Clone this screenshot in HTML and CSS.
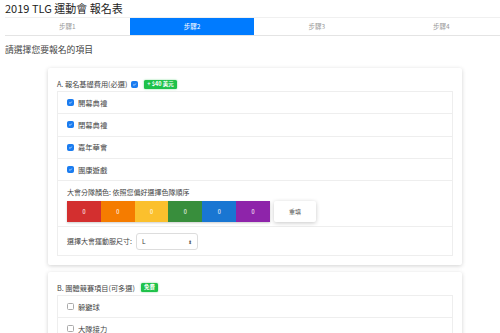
FILE: index.html
```html
<!DOCTYPE html>
<html lang="zh-Hant">
<head>
<meta charset="utf-8">
<title>2019 TLG 運動會 報名表</title>
<link rel="stylesheet" href="styles.css">
</head>
<body>
<div class="page">
  <h1 class="title">2019 TLG 運動會 報名表</h1>
  <div class="steps">
    <div class="step">步驟1</div>
    <div class="step active">步驟2</div>
    <div class="step">步驟3</div>
    <div class="step">步驟4</div>
  </div>
  <p class="prompt">請選擇您要報名的項目</p>

  <section class="card">
    <div class="card-head">
      <span>A. 報名基礎費用(必選)</span>
      <span class="cb checked"><svg viewBox="0 0 8 8"><path d="M2 4.2 L3.4 5.5 L6 2.6" fill="none" stroke="#fff" stroke-width="1.1"/></svg></span>
      <span class="badge">+ $40 美元</span>
    </div>
    <ul class="list">
      <li class="item"><span class="cb checked"><svg viewBox="0 0 8 8"><path d="M2 4.2 L3.4 5.5 L6 2.6" fill="none" stroke="#fff" stroke-width="1.1"/></svg></span>開幕典禮</li>
      <li class="item"><span class="cb checked"><svg viewBox="0 0 8 8"><path d="M2 4.2 L3.4 5.5 L6 2.6" fill="none" stroke="#fff" stroke-width="1.1"/></svg></span>閉幕典禮</li>
      <li class="item"><span class="cb checked"><svg viewBox="0 0 8 8"><path d="M2 4.2 L3.4 5.5 L6 2.6" fill="none" stroke="#fff" stroke-width="1.1"/></svg></span>嘉年華會</li>
      <li class="item"><span class="cb checked"><svg viewBox="0 0 8 8"><path d="M2 4.2 L3.4 5.5 L6 2.6" fill="none" stroke="#fff" stroke-width="1.1"/></svg></span>團康遊戲</li>
      <li class="item color-item">
        <div class="color-label">大會分隊顏色: 依照您偏好選擇色隊順序</div>
        <div class="color-row">
          <div class="swatches">
            <span class="sw red">0</span>
            <span class="sw orange">0</span>
            <span class="sw yellow">0</span>
            <span class="sw green">0</span>
            <span class="sw blue">0</span>
            <span class="sw purple">0</span>
          </div>
          <button class="reset">重填</button>
        </div>
      </li>
      <li class="item size-item">
        <span>選擇大會運動服尺寸:</span>
        <span class="select"><span>L</span><span class="arrows">⬍</span></span>
      </li>
    </ul>
  </section>

  <section class="card">
    <div class="card-head">
      <span>B. 團體競賽項目(可多選)</span>
      <span class="badge">免費</span>
    </div>
    <ul class="list">
      <li class="item"><span class="cb"></span>躲避球</li>
      <li class="item"><span class="cb"></span>大隊接力</li>
      <li class="item"><span class="cb"></span>拔河</li>
    </ul>
  </section>
</div>
</body>
</html>
```
FILE: styles.css
```css
html, body {
  margin: 0;
  padding: 0;
  background: #fff;
  overflow: hidden;
}
body {
  font-family: "Noto Sans CJK TC", "Noto Sans", sans-serif;
  color: #333;
}
.page {
  width: 500px;
  padding-left: 5px;
}
.title {
  margin: 0;
  height: 17px;
  font-size: 11px;
  line-height: 17px;
  font-weight: 400;
  color: #222;
}
.steps {
  display: grid;
  grid-template-columns: repeat(4, 124.7px);
  height: 17px;
  border-top: 1px solid #f0f0f0;
  border-bottom: 1px solid #e4e4e4;
}
.step {
  font-size: 6.5px;
  line-height: 17px;
  text-align: center;
  color: #999;
}
.step.active {
  background: #007bff;
  color: #fff;
}
.prompt {
  margin: 9px 0 13px;
  font-size: 8.8px;
  line-height: 10px;
  color: #444;
}
.card {
  margin: 0 43px 7px 43px;
  padding: 9px 9px 9px;
  background: #fff;
  border-radius: 2px;
  box-shadow: 0 1px 4px rgba(0,0,0,0.18);
}
.card-head {
  display: flex;
  align-items: center;
  gap: 4px;
  height: 14px;
  font-size: 7.2px;
  color: #444;
}
.cb {
  display: inline-flex;
  align-items: center;
  justify-content: center;
  width: 7px;
  height: 7px;
  box-sizing: border-box;
  border: 1px solid #aaa;
  border-radius: 1.5px;
  background: #fff;
  flex: none;
}
.cb.checked {
  border-color: #1a7cf0;
  background: #1a7cf0;
}
.cb svg {
  width: 7px;
  height: 7px;
}
.badge {
  margin-left: 2px;
  padding: 0 3px;
  height: 9px;
  line-height: 9px;
  font-size: 5.5px;
  font-weight: 700;
  color: #fff;
  background: #1fc24a;
  border-radius: 1.5px;
  box-shadow: 0 0 2px rgba(31,194,74,0.6);
}
.list {
  list-style: none;
  margin: 0;
  padding: 0;
  border: 1px solid #eee;
  border-top: none;
}
.item {
  display: flex;
  align-items: center;
  gap: 4px;
  height: 21.3px;
  padding: 0 9px;
  border-top: 1px solid #eee;
  font-size: 7.3px;
  color: #444;
}
.color-item {
  display: block;
  height: auto;
  padding: 7px 9px 4px;
}
.color-label {
  font-size: 7px;
  line-height: 9px;
  margin-bottom: 4px;
}
.color-row {
  display: flex;
  align-items: stretch;
  gap: 4px;
  height: 21px;
}
.swatches {
  display: flex;
  width: 203px;
  box-shadow: 0 1px 2px rgba(0,0,0,0.2);
}
.sw {
  flex: 1;
  display: flex;
  align-items: center;
  justify-content: center;
  color: #fff;
  font-size: 5.5px;
}
.red { background: #d32f2f; }
.orange { background: #f57c00; }
.yellow { background: #fbc02d; }
.green { background: #388e3c; }
.blue { background: #1976d2; }
.purple { background: #8e24aa; }
.reset {
  width: 42px;
  border: none;
  background: #fff;
  border-radius: 2px;
  box-shadow: 0 1px 4px rgba(0,0,0,0.22);
  font-family: inherit;
  font-size: 6px;
  color: #555;
  padding: 0;
}
.size-item {
  height: 27.7px;
  gap: 4px;
  font-size: 7px;
}
.select {
  display: flex;
  align-items: center;
  justify-content: space-between;
  width: 62px;
  height: 17px;
  box-sizing: border-box;
  padding: 0 5px 0 5px;
  border: 1px solid #ddd;
  border-radius: 3px;
  font-size: 6.5px;
  color: #333;
}
.arrows {
  font-size: 5px;
  color: #555;
}
```
